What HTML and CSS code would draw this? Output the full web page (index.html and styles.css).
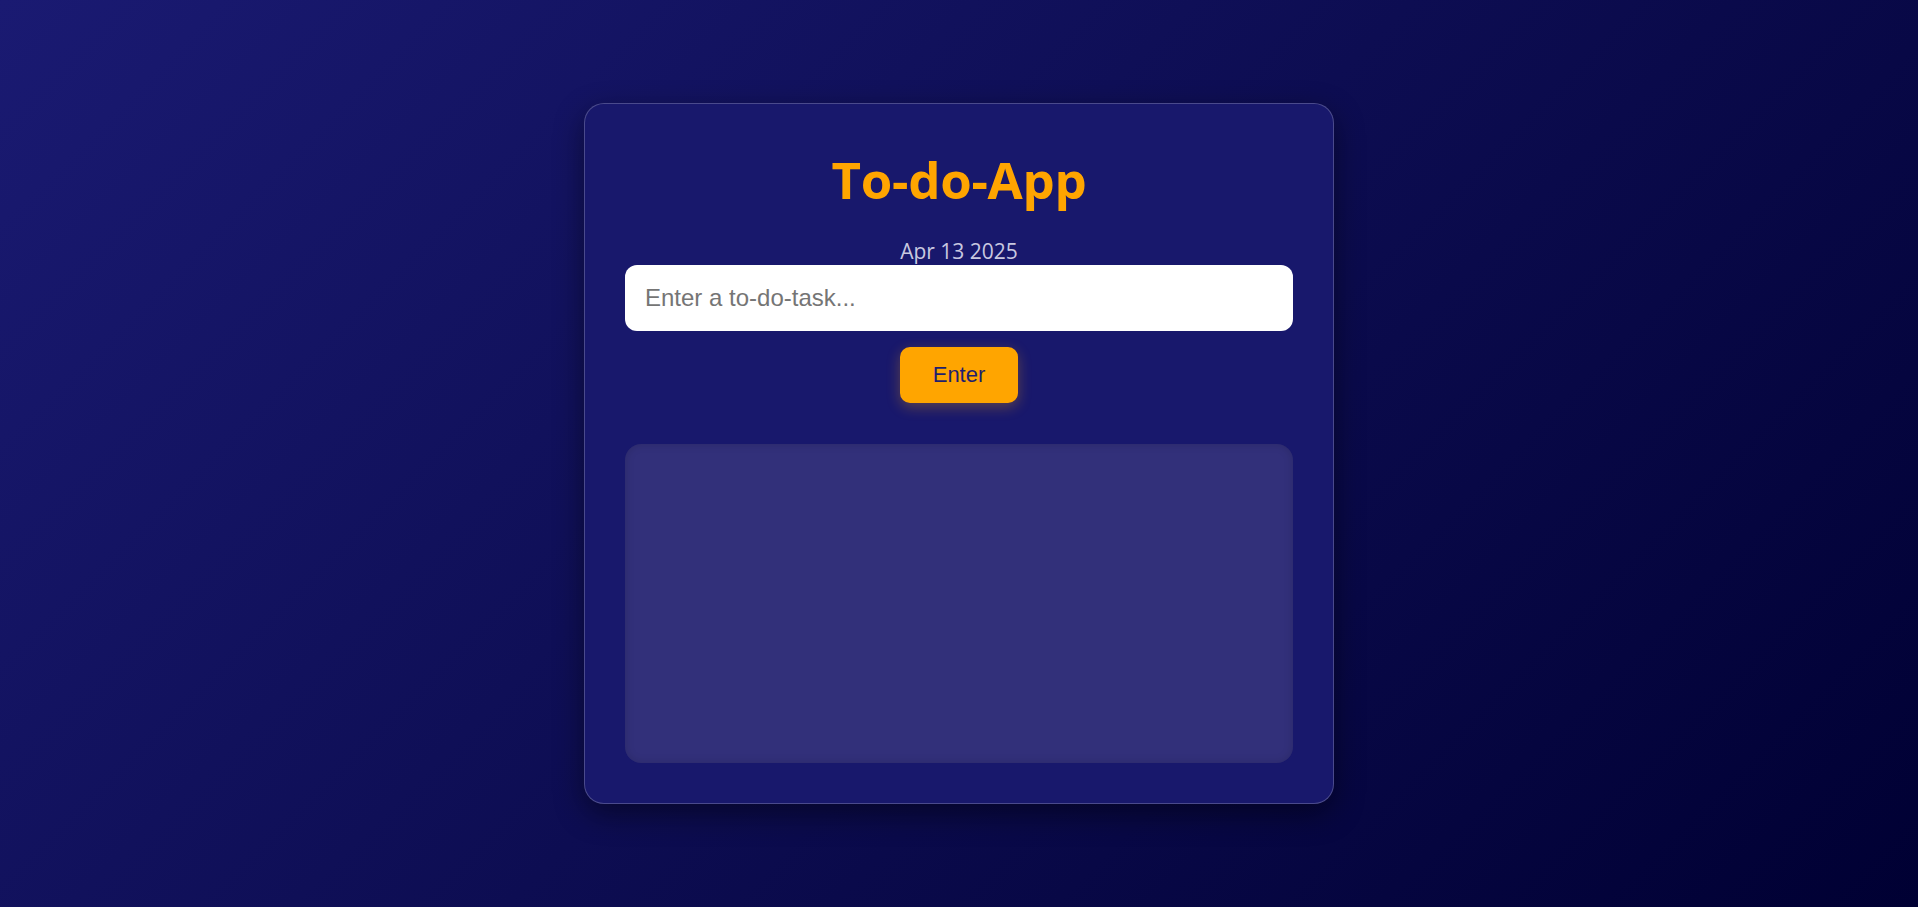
FILE: index.html
```html
<!DOCTYPE html>
<html lang="en">
<head>
<meta charset="UTF-8">
<title>To-do-App</title>
<link rel="stylesheet" href="styles.css">
</head>
<body>
<main class="card">
  <h1 class="title">To-do-App</h1>
  <div class="date">Apr 13 2025</div>
  <input class="task-input" type="text" placeholder="Enter a to-do-task...">
  <div class="actions">
    <button class="enter-btn" type="button">Enter</button>
  </div>
  <ul class="task-list"></ul>
</main>
</body>
</html>
```

FILE: styles.css
```css
html, body {
  margin: 0;
  padding: 0;
  height: 100%;
}

body {
  min-height: 100vh;
  display: flex;
  align-items: center;
  justify-content: center;
  background: linear-gradient(135deg, #1a1a72 0%, #0d0d52 50%, #000033 100%);
  font-family: "Open Sans", "Noto Sans", sans-serif;
}

.card {
  box-sizing: border-box;
  width: 750px;
  height: 701px;
  padding: 40px;
  background: #18186c;
  border: 1px solid rgba(255, 255, 255, 0.22);
  border-radius: 20px;
  box-shadow: 0 10px 30px rgba(0, 0, 0, 0.45);
  display: flex;
  flex-direction: column;
  align-items: stretch;
}

.title {
  margin: 0 0 24px;
  font-size: 51px;
  line-height: 70px;
  font-weight: 700;
  color: #ffa500;
  text-align: center;
  letter-spacing: -0.3px;
}

.date {
  font-size: 21px;
  line-height: 28px;
  color: #c8c8e0;
  text-align: center;
  margin-top: -1px;
}

.task-input {
  box-sizing: border-box;
  width: 100%;
  height: 66px;
  border: none;
  outline: none;
  border-radius: 12px;
  padding: 0 20px;
  background: #ffffff;
  font-family: "Liberation Sans", Arial, sans-serif;
  font-size: 24px;
  color: #222;
}

.task-input::placeholder {
  color: #757575;
}

.actions {
  display: flex;
  justify-content: center;
  margin-top: 16px;
}

.enter-btn {
  width: 118px;
  height: 56px;
  border: none;
  border-radius: 10px;
  background: #ffa500;
  color: #1f1f6e;
  font-family: "Liberation Sans", Arial, sans-serif;
  font-size: 22px;
  box-shadow: 0 4px 14px rgba(255, 165, 0, 0.3);
  cursor: pointer;
}

.task-list {
  list-style: none;
  margin: 41px 0 0;
  padding: 0;
  height: 319px;
  border-radius: 16px;
  background: #32307a;
  box-shadow: inset 0 0 10px rgba(0, 0, 0, 0.15);
}
```
